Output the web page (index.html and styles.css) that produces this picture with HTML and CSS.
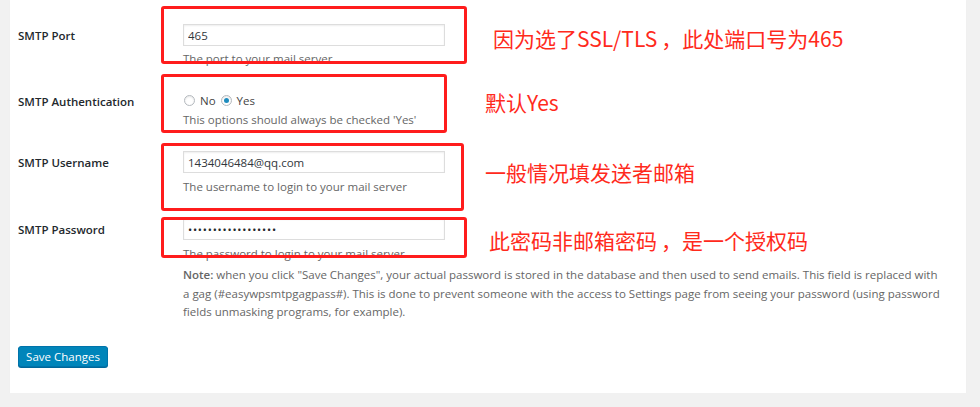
FILE: index.html
```html
<!DOCTYPE html>
<html lang="zh-CN">
<head>
<meta charset="utf-8">
<title>SMTP Settings</title>
<link rel="stylesheet" href="styles.css">
</head>
<body>
<div class="panel">
  <div class="form">
    <div class="row">
      <div class="th">SMTP Port</div>
      <div class="td">
        <input class="field" type="text" value="465">
        <p class="desc first">The port to your mail server</p>
      </div>
    </div>
    <div class="row">
      <div class="th">SMTP Authentication</div>
      <div class="td">
        <div class="radios">
          <label class="opt"><input class="radio" type="radio" name="auth"> No</label>
          <label class="opt"><input class="radio" type="radio" name="auth" checked> Yes</label>
        </div>
        <p class="desc tight">This options should always be checked 'Yes'</p>
      </div>
    </div>
    <div class="row">
      <div class="th">SMTP Username</div>
      <div class="td">
        <input class="field" type="text" value="1434046484@qq.com">
        <p class="desc">The username to login to your mail server</p>
      </div>
    </div>
    <div class="row">
      <div class="th">SMTP Password</div>
      <div class="td">
        <input class="field pass" type="password" value="xxxxxxxxxxxxxxxxxx">
        <p class="desc">The password to login to your mail server</p>
        <p class="note"><b>Note:</b> when you click "Save Changes", your actual password is stored in the database and then used to send emails. This field is replaced with a gag (#easywpsmtpgagpass#). This is done to prevent someone with the access to Settings page from seeing your password (using password fields unmasking programs, for example).</p>
      </div>
    </div>
  </div>
  <div class="submit"><button class="btn" type="button">Save Changes</button></div>

  <div class="mark m1"></div>
  <div class="mark m2"></div>
  <div class="mark m3"></div>
  <div class="mark m4"></div>
  <div class="ann a1">因为选了SSL/TLS<span class="comma">，</span>此处端口号为465</div>
  <div class="ann a2">默认Yes</div>
  <div class="ann a3">一般情况填发送者邮箱</div>
  <div class="ann a4">此密码非邮箱密码<span class="comma">，</span>是一个授权码</div>
</div>
</body>
</html>
```
FILE: styles.css
```css
html, body {
  margin: 0;
  padding: 0;
  background: #f1f1f1;
}
body {
  font-family: "Open Sans", "Noto Sans", sans-serif;
  color: #444;
}
.panel {
  position: relative;
  margin-left: 10px;
  width: 956px;
  height: 393px;
  box-sizing: border-box;
  background: #fff;
  box-shadow: 0 1px 1px rgba(0,0,0,0.04);
  padding: 24px 0 0 8px;
}
.form {
  display: flex;
  flex-direction: column;
  gap: 22px;
}
.row {
  display: grid;
  grid-template-columns: 165px 1fr;
}
.th {
  padding-top: 3px;
  line-height: 18px;
  font-size: 11.5px;
  font-weight: 600;
  color: #23282d;
}
.td {
  display: flex;
  flex-direction: column;
  align-items: flex-start;
}
.field {
  box-sizing: border-box;
  width: 262px;
  height: 22px;
  margin: 0;
  padding: 0 4px;
  border: 1px solid #ddd;
  box-shadow: inset 0 1px 2px rgba(0,0,0,0.07);
  background: #fff;
  font-family: "Open Sans", sans-serif;
  font-size: 11.5px;
  color: #32373c;
  outline: none;
}
.pass {
  font-size: 11px;
  letter-spacing: 0.8px;
  color: #23282d;
}
.desc {
  margin: 5px 0 0;
  line-height: 18px;
  font-size: 11.5px;
  color: #666;
}
.desc.first {
  margin-top: 4px;
}
.desc.tight {
  margin-top: 0;
}
.radios {
  display: flex;
  align-items: center;
  height: 21px;
  gap: 4px;
  font-size: 11.5px;
  color: #444;
}
.opt {
  display: flex;
  align-items: center;
  gap: 5px;
}
.radio {
  appearance: none;
  -webkit-appearance: none;
  box-sizing: border-box;
  width: 11px;
  height: 11px;
  margin: 0 0 0 1px;
  border: 1px solid #b4b9be;
  border-radius: 50%;
  background: #fff;
  box-shadow: inset 0 1px 2px rgba(0,0,0,0.1);
  display: grid;
  place-items: center;
}
.radio:checked::before {
  content: "";
  width: 5px;
  height: 5px;
  border-radius: 50%;
  background: #1e8cbe;
}
.note {
  margin: 3px 0 0;
  line-height: 18.5px;
  font-size: 11.5px;
  color: #666;
  max-width: 760px;
}
.note b {
  font-weight: 600;
}
.submit {
  margin-top: 22px;
}
.btn {
  box-sizing: border-box;
  height: 21px;
  width: 90px;
  padding: 0;
  border: 1px solid #0073aa;
  border-radius: 3px;
  background: #0085ba;
  box-shadow: 0 1px 0 #006799;
  color: #fff;
  font-family: "Open Sans", sans-serif;
  font-size: 11.5px;
  line-height: 19px;
}
.mark {
  position: absolute;
  box-sizing: border-box;
  border: 3px solid #ff1c1c;
  border-radius: 3px;
}
.m1 { left: 151px; top: 6px; width: 306px; height: 58px; }
.m2 { left: 151px; top: 74px; width: 286px; height: 59px; }
.m3 { left: 151px; top: 143px; width: 303px; height: 68px; }
.m4 { left: 151px; top: 217px; width: 306px; height: 41px; }
.ann {
  position: absolute;
  font-family: "Noto Sans CJK SC", sans-serif;
  font-size: 21px;
  line-height: 24px;
  color: #ff2a1c;
  white-space: nowrap;
}
.comma {
  padding-left: 4px;
}
.a1 { left: 483px; top: 26px; }
.a2 { left: 475px; top: 90px; }
.a3 { left: 475px; top: 160px; }
.a4 { left: 479px; top: 228px; }
```
